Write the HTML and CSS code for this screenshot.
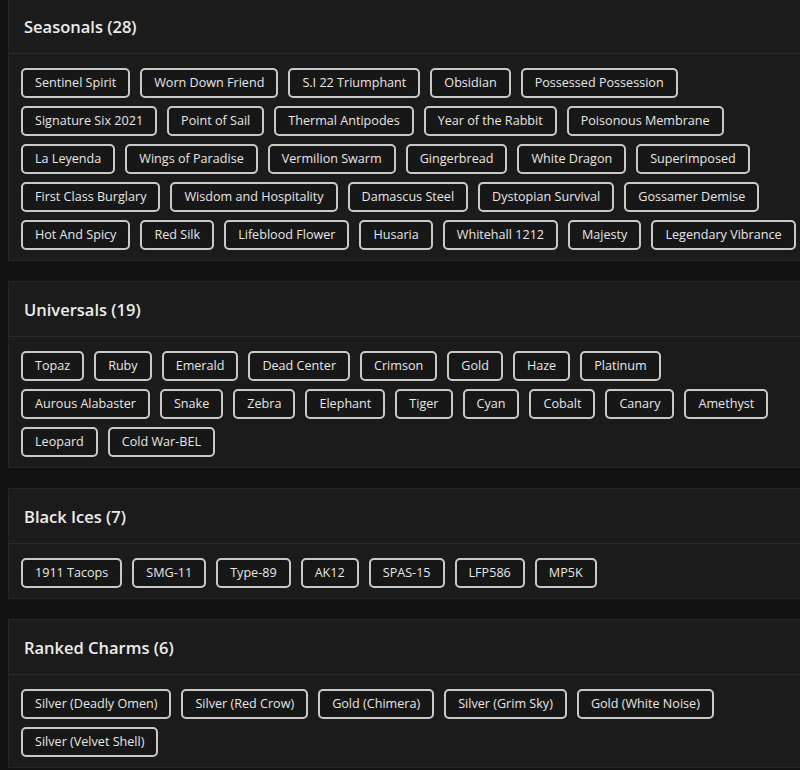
FILE: index.html
```html
<!DOCTYPE html>
<html>
<head>
<meta charset="utf-8">
<link rel="stylesheet" href="styles.css">
</head>
<body>
<div class="page">
  <section class="card">
    <h2 class="card-title">Seasonals (28)</h2>
    <div class="chips">
      <span class="chip">Sentinel Spirit</span>
      <span class="chip">Worn Down Friend</span>
      <span class="chip">S.I 22 Triumphant</span>
      <span class="chip">Obsidian</span>
      <span class="chip">Possessed Possession</span>
      <span class="chip">Signature Six 2021</span>
      <span class="chip">Point of Sail</span>
      <span class="chip">Thermal Antipodes</span>
      <span class="chip">Year of the Rabbit</span>
      <span class="chip">Poisonous Membrane</span>
      <span class="chip">La Leyenda</span>
      <span class="chip">Wings of Paradise</span>
      <span class="chip">Vermilion Swarm</span>
      <span class="chip">Gingerbread</span>
      <span class="chip">White Dragon</span>
      <span class="chip">Superimposed</span>
      <span class="chip">First Class Burglary</span>
      <span class="chip">Wisdom and Hospitality</span>
      <span class="chip">Damascus Steel</span>
      <span class="chip">Dystopian Survival</span>
      <span class="chip">Gossamer Demise</span>
      <span class="chip">Hot And Spicy</span>
      <span class="chip">Red Silk</span>
      <span class="chip">Lifeblood Flower</span>
      <span class="chip">Husaria</span>
      <span class="chip">Whitehall 1212</span>
      <span class="chip">Majesty</span>
      <span class="chip">Legendary Vibrance</span>
    </div>
  </section>
  <section class="card">
    <h2 class="card-title">Universals (19)</h2>
    <div class="chips">
      <span class="chip">Topaz</span>
      <span class="chip">Ruby</span>
      <span class="chip">Emerald</span>
      <span class="chip">Dead Center</span>
      <span class="chip">Crimson</span>
      <span class="chip">Gold</span>
      <span class="chip">Haze</span>
      <span class="chip">Platinum</span>
      <span class="chip">Aurous Alabaster</span>
      <span class="chip">Snake</span>
      <span class="chip">Zebra</span>
      <span class="chip">Elephant</span>
      <span class="chip">Tiger</span>
      <span class="chip">Cyan</span>
      <span class="chip">Cobalt</span>
      <span class="chip">Canary</span>
      <span class="chip">Amethyst</span>
      <span class="chip">Leopard</span>
      <span class="chip">Cold War-BEL</span>
    </div>
  </section>
  <section class="card">
    <h2 class="card-title">Black Ices (7)</h2>
    <div class="chips">
      <span class="chip">1911 Tacops</span>
      <span class="chip">SMG-11</span>
      <span class="chip">Type-89</span>
      <span class="chip">AK12</span>
      <span class="chip">SPAS-15</span>
      <span class="chip">LFP586</span>
      <span class="chip">MP5K</span>
    </div>
  </section>
  <section class="card">
    <h2 class="card-title">Ranked Charms (6)</h2>
    <div class="chips">
      <span class="chip">Silver (Deadly Omen)</span>
      <span class="chip">Silver (Red Crow)</span>
      <span class="chip">Gold (Chimera)</span>
      <span class="chip">Silver (Grim Sky)</span>
      <span class="chip">Gold (White Noise)</span>
      <span class="chip">Silver (Velvet Shell)</span>
    </div>
  </section>
</div>
</body>
</html>
```
FILE: styles.css
```css
html, body {
  margin: 0;
  padding: 0;
  background: #121212;
  overflow: hidden;
}
body {
  font-family: "Open Sans", "Noto Sans", sans-serif;
  color: #e4e4e4;
}
.page {
  padding-left: 8px;
  margin-top: -2px;
  width: 801px;
  display: flex;
  flex-direction: column;
  gap: 20px;
}
.card {
  background: #1b1b1b;
  border: 1px solid #262626;
  border-right: none;
}
.card-title {
  margin: 0;
  height: 54px;
  display: flex;
  align-items: center;
  padding: 0 15px;
  font-size: 16.5px;
  font-weight: 600;
  color: #ececec;
  border-bottom: 1px solid #2a2a2a;
}
.chips {
  display: flex;
  flex-wrap: wrap;
  gap: 8px 10px;
  padding: 14px 12px 10px;
}
.chip {
  display: inline-block;
  font-size: 12.6px;
  line-height: 16px;
  padding: 5px 12px;
  border: 2px solid #c9c9c9;
  border-radius: 5px;
  background: #171717;
  color: #e6e6e6;
  white-space: nowrap;
}
```
